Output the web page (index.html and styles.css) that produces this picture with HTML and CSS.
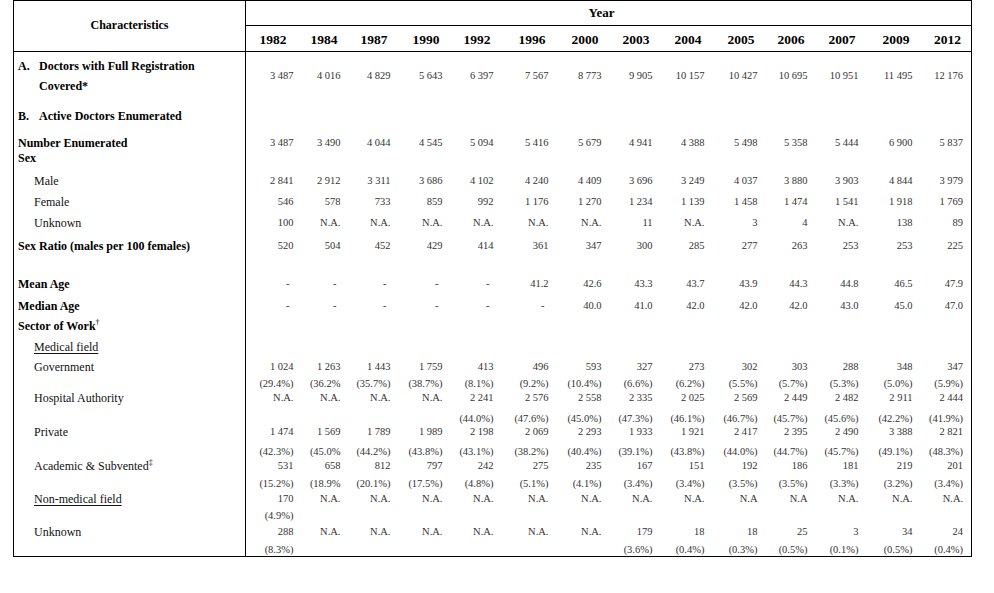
FILE: index.html
```html
<!DOCTYPE html>
<html lang="en">
<head>
<meta charset="utf-8">
<title>Characteristics of Doctors</title>
<link rel="stylesheet" href="styles.css">
</head>
<body>
<table class="stats">
  <colgroup>
    <col class="w-label">
    <col class="w52"><col class="w47"><col class="w50"><col class="w52"><col class="w51">
    <col class="w55"><col class="w53"><col class="w51"><col class="w52"><col class="w53">
    <col class="w50"><col class="w51"><col class="w54"><col class="w55">
  </colgroup>
  <thead>
    <tr class="hd1">
      <th rowspan="2" class="char">Characteristics</th>
      <th colspan="14" class="year">Year</th>
    </tr>
    <tr class="hd2">
      <th class="first">1982</th><th>1984</th><th>1987</th><th>1990</th><th>1992</th><th>1996</th><th>2000</th>
      <th>2003</th><th>2004</th><th>2005</th><th>2006</th><th>2007</th><th>2009</th><th class="last">2012</th>
    </tr>
  </thead>
  <tbody>
    <tr class="h58 row-a">
      <td class="lab bold tall"><div class="lettered"><span class="letter">A.</span><span>Doctors with Full Registration<br>Covered*</span></div></td>
      <td>3 487</td><td>4 016</td><td>4 829</td><td>5 643</td><td>6 397</td><td>7 567</td><td>8 773</td><td>9 905</td><td>10 157</td><td>10 427</td><td>10 695</td><td>10 951</td><td>11 495</td><td class="last">12 176</td>
    </tr>
    <tr class="h27">
      <td class="lab bold"><div class="lettered"><span class="letter">B.</span><span>Active Doctors Enumerated</span></div></td>
      <td></td><td></td><td></td><td></td><td></td><td></td><td></td><td></td><td></td><td></td><td></td><td></td><td></td><td class="last"></td>
    </tr>
    <tr class="h15">
      <td class="lab bold">Number Enumerated</td>
      <td>3 487</td><td>3 490</td><td>4 044</td><td>4 545</td><td>5 094</td><td>5 416</td><td>5 679</td><td>4 941</td><td>4 388</td><td>5 498</td><td>5 358</td><td>5 444</td><td>6 900</td><td class="last">5 837</td>
    </tr>
    <tr class="h23">
      <td class="lab bold">Sex</td>
      <td></td><td></td><td></td><td></td><td></td><td></td><td></td><td></td><td></td><td></td><td></td><td></td><td></td><td class="last"></td>
    </tr>
    <tr class="h21">
      <td class="lab sub">Male</td>
      <td>2 841</td><td>2 912</td><td>3 311</td><td>3 686</td><td>4 102</td><td>4 240</td><td>4 409</td><td>3 696</td><td>3 249</td><td>4 037</td><td>3 880</td><td>3 903</td><td>4 844</td><td class="last">3 979</td>
    </tr>
    <tr class="h21">
      <td class="lab sub">Female</td>
      <td>546</td><td>578</td><td>733</td><td>859</td><td>992</td><td>1 176</td><td>1 270</td><td>1 234</td><td>1 139</td><td>1 458</td><td>1 474</td><td>1 541</td><td>1 918</td><td class="last">1 769</td>
    </tr>
    <tr class="h23">
      <td class="lab sub">Unknown</td>
      <td>100</td><td>N.A.</td><td>N.A.</td><td>N.A.</td><td>N.A.</td><td>N.A.</td><td>N.A.</td><td>11</td><td>N.A.</td><td>3</td><td>4</td><td>N.A.</td><td>138</td><td class="last">89</td>
    </tr>
    <tr class="h38">
      <td class="lab bold">Sex Ratio (males per 100 females)</td>
      <td>520</td><td>504</td><td>452</td><td>429</td><td>414</td><td>361</td><td>347</td><td>300</td><td>285</td><td>277</td><td>263</td><td>253</td><td>253</td><td class="last">225</td>
    </tr>
    <tr class="h22">
      <td class="lab bold">Mean Age</td>
      <td class="dash">-</td><td class="dash">-</td><td class="dash">-</td><td class="dash">-</td><td class="dash">-</td><td>41.2</td><td>42.6</td><td>43.3</td><td>43.7</td><td>43.9</td><td>44.3</td><td>44.8</td><td>46.5</td><td class="last">47.9</td>
    </tr>
    <tr class="h20">
      <td class="lab bold">Median Age</td>
      <td class="dash">-</td><td class="dash">-</td><td class="dash">-</td><td class="dash">-</td><td class="dash">-</td><td class="dash">-</td><td>40.0</td><td>41.0</td><td>42.0</td><td>42.0</td><td>42.0</td><td>43.0</td><td>45.0</td><td class="last">47.0</td>
    </tr>
    <tr class="h21">
      <td class="lab bold">Sector of Work<sup>†</sup></td>
      <td></td><td></td><td></td><td></td><td></td><td></td><td></td><td></td><td></td><td></td><td></td><td></td><td></td><td class="last"></td>
    </tr>
    <tr class="h20">
      <td class="lab sub"><u>Medical field</u></td>
      <td></td><td></td><td></td><td></td><td></td><td></td><td></td><td></td><td></td><td></td><td></td><td></td><td></td><td class="last"></td>
    </tr>
    <tr class="h17">
      <td class="lab sub">Government</td>
      <td>1 024</td><td>1 263</td><td>1 443</td><td>1 759</td><td>413</td><td>496</td><td>593</td><td>327</td><td>273</td><td>302</td><td>303</td><td>288</td><td>348</td><td class="last">347</td>
    </tr>
    <tr class="h14">
      <td class="lab"></td>
      <td>(29.4%)</td><td>(36.2%</td><td>(35.7%)</td><td>(38.7%)</td><td>(8.1%)</td><td>(9.2%)</td><td>(10.4%)</td><td>(6.6%)</td><td>(6.2%)</td><td>(5.5%)</td><td>(5.7%)</td><td>(5.3%)</td><td>(5.0%)</td><td class="last">(5.9%)</td>
    </tr>
    <tr class="h21">
      <td class="lab sub">Hospital Authority</td>
      <td>N.A.</td><td>N.A.</td><td>N.A.</td><td>N.A.</td><td>2 241</td><td>2 576</td><td>2 558</td><td>2 335</td><td>2 025</td><td>2 569</td><td>2 449</td><td>2 482</td><td>2 911</td><td class="last">2 444</td>
    </tr>
    <tr class="h13">
      <td class="lab"></td>
      <td></td><td></td><td></td><td></td><td>(44.0%)</td><td>(47.6%)</td><td>(45.0%)</td><td>(47.3%)</td><td>(46.1%)</td><td>(46.7%)</td><td>(45.7%)</td><td>(45.6%)</td><td>(42.2%)</td><td class="last">(41.9%)</td>
    </tr>
    <tr class="h20">
      <td class="lab sub">Private</td>
      <td>1 474</td><td>1 569</td><td>1 789</td><td>1 989</td><td>2 198</td><td>2 069</td><td>2 293</td><td>1 933</td><td>1 921</td><td>2 417</td><td>2 395</td><td>2 490</td><td>3 388</td><td class="last">2 821</td>
    </tr>
    <tr class="h14">
      <td class="lab"></td>
      <td>(42.3%)</td><td>(45.0%</td><td>(44.2%)</td><td>(43.8%)</td><td>(43.1%)</td><td>(38.2%)</td><td>(40.4%)</td><td>(39.1%)</td><td>(43.8%)</td><td>(44.0%)</td><td>(44.7%)</td><td>(45.7%)</td><td>(49.1%)</td><td class="last">(48.3%)</td>
    </tr>
    <tr class="h18">
      <td class="lab sub">Academic &amp; Subvented<sup>‡</sup></td>
      <td>531</td><td>658</td><td>812</td><td>797</td><td>242</td><td>275</td><td>235</td><td>167</td><td>151</td><td>192</td><td>186</td><td>181</td><td>219</td><td class="last">201</td>
    </tr>
    <tr class="h15">
      <td class="lab"></td>
      <td>(15.2%)</td><td>(18.9%</td><td>(20.1%)</td><td>(17.5%)</td><td>(4.8%)</td><td>(5.1%)</td><td>(4.1%)</td><td>(3.4%)</td><td>(3.4%)</td><td>(3.5%)</td><td>(3.5%)</td><td>(3.3%)</td><td>(3.2%)</td><td class="last">(3.4%)</td>
    </tr>
    <tr class="h17">
      <td class="lab sub"><u>Non-medical field</u></td>
      <td>170</td><td>N.A.</td><td>N.A.</td><td>N.A.</td><td>N.A.</td><td>N.A.</td><td>N.A.</td><td>N.A.</td><td>N.A.</td><td>N.A</td><td>N.A</td><td>N.A.</td><td>N.A.</td><td class="last">N.A.</td>
    </tr>
    <tr class="h16">
      <td class="lab"></td>
      <td>(4.9%)</td><td></td><td></td><td></td><td></td><td></td><td></td><td></td><td></td><td></td><td></td><td></td><td></td><td class="last"></td>
    </tr>
    <tr class="h18">
      <td class="lab sub">Unknown</td>
      <td>288</td><td>N.A.</td><td>N.A.</td><td>N.A.</td><td>N.A.</td><td>N.A.</td><td>N.A.</td><td>179</td><td>18</td><td>18</td><td>25</td><td>3</td><td>34</td><td class="last">24</td>
    </tr>
    <tr class="h11">
      <td class="lab"></td>
      <td>(8.3%)</td><td></td><td></td><td></td><td></td><td></td><td></td><td>(3.6%)</td><td>(0.4%)</td><td>(0.3%)</td><td>(0.5%)</td><td>(0.1%)</td><td>(0.5%)</td><td class="last">(0.4%)</td>
    </tr>
  </tbody>
</table>
</body>
</html>
```
FILE: styles.css
```css
html, body {
  margin: 0;
  padding: 0;
  background: #ffffff;
}

body {
  padding: 0 0 0 13px;
  font-family: "Liberation Serif", "Times New Roman", serif;
  color: #000;
}

.stats {
  border-collapse: collapse;
  table-layout: fixed;
  width: 959px;
  border: 1px solid #000;
}

.w-label { width: 232px; }
.w47 { width: 47px; }
.w50 { width: 50px; }
.w51 { width: 51px; }
.w52 { width: 52px; }
.w53 { width: 53px; }
.w54 { width: 54px; }
.w55 { width: 55px; }

.stats th {
  font-weight: bold;
  font-size: 13px;
  line-height: 14px;
  padding: 0;
}

.hd1 { height: 25px; }
.hd2 { height: 26px; }

.stats th.char {
  font-size: 12px;
  text-align: center;
  vertical-align: middle;
  border-right: 1px solid #000;
  border-bottom: 1px solid #000;
  padding-bottom: 2px;
}

.stats th.year {
  text-align: center;
  vertical-align: middle;
  border-bottom: 1px solid #000;
  padding-right: 14px;
}

.hd2 th {
  text-align: right;
  vertical-align: middle;
  padding: 3px 7px 0 0;
  border-bottom: 1px solid #000;
  font-size: 13.5px;
}

.hd2 th.first { padding-right: 11px; }
.hd2 th.last { padding-right: 10px; }

.stats td {
  padding: 0 4px 0 0;
  vertical-align: top;
  line-height: 12px;
  text-align: right;
  font-size: 10.5px;
  color: #333;
  white-space: nowrap;
}

.stats td.last { padding-right: 8px; }

.stats td.dash { padding-right: 8px; }

.stats td.lab {
  text-align: left;
  font-size: 12px;
  color: #000;
  padding: 0 0 0 4px;
  border-right: 1px solid #000;
}

.stats td.bold { font-weight: bold; }

.stats td.sub { padding-left: 20px; color: #111; }

.row-a td { padding-top: 18px; }
.row-a td.tall { padding-top: 4px; line-height: 20px; }

.lettered { display: flex; }
.letter { width: 21px; flex: none; }

sup {
  font-size: 8px;
  line-height: 0;
  vertical-align: 5px;
  font-weight: normal;
}

u { text-underline-offset: 2px; }

.h11 { height: 11px; }
.h13 { height: 13px; }
.h14 { height: 14px; }
.h15 { height: 15px; }
.h16 { height: 16px; }
.h17 { height: 17px; }
.h18 { height: 18px; }
.h20 { height: 20px; }
.h21 { height: 21px; }
.h22 { height: 22px; }
.h23 { height: 23px; }
.h27 { height: 27px; }
.h38 { height: 38px; }
.h58 { height: 58px; }
```
